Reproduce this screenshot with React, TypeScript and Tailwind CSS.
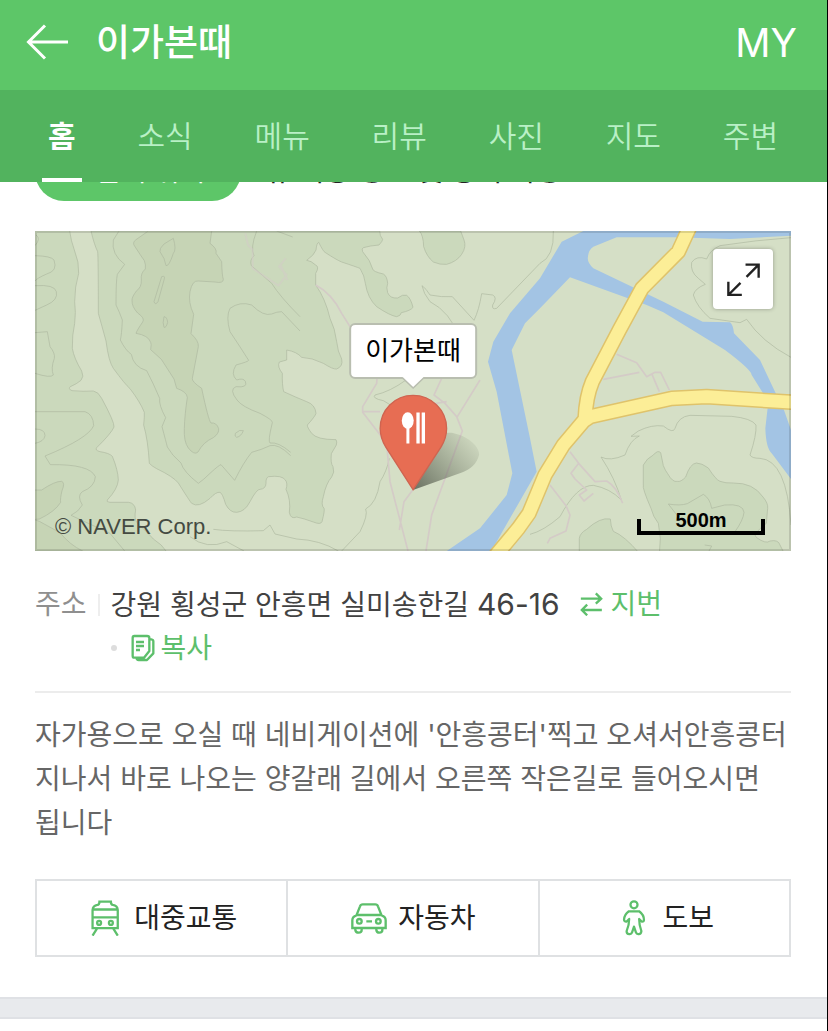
import type { ReactNode } from 'react';

const tabs = ['홈', '소식', '메뉴', '리뷰', '사진', '지도', '주변'];

function BackIcon() {
  return (
    <svg viewBox="0 0 42 36" className="h-9 w-[42px]" fill="none" stroke="currentColor" strokeWidth="3" aria-hidden="true">
      <path d="M19 1.5 2.5 18 19 34.5M2.5 18H42" />
    </svg>
  );
}

function TrainIcon() {
  return (
    <svg viewBox="211 121 84 110" className="h-9 w-7" fill="none" stroke="currentColor" strokeWidth="7" aria-hidden="true">
      <path d="M215 207V152Q216 138 230 136Q236 135 236 126H271Q271 135 277 136Q291 138 292 152V207ZM215 150H292M215 174H292M229 208 215 230M278 208 292 230" />
      <circle cx="235" cy="191" r="6" />
      <circle cx="271" cy="191" r="6" />
    </svg>
  );
}

function CarIcon() {
  return (
    <svg viewBox="993 130 108 93" className="h-[31px] w-9" fill="none" stroke="currentColor" strokeWidth="7" aria-hidden="true">
      <path d="M1009 168 1020 140Q1022 134 1028 134H1066Q1072 134 1074 140L1085 168M1009 166H1085M1009 168Q997 171 997 182V205H1097V182Q1097 171 1085 168M1039 185H1056" />
      <circle cx="1018" cy="185" r="7" />
      <circle cx="1075" cy="185" r="7" />
      <path d="M1006 206V211Q1007 219 1016 219Q1025 219 1025 211V206M1069 206V211Q1070 219 1078 219Q1087 219 1087 211V206" />
    </svg>
  );
}

function WalkIcon() {
  return (
    <svg viewBox="663 121 74 112" className="h-9 w-6" fill="none" stroke="currentColor" strokeWidth="7" strokeLinejoin="round" aria-hidden="true">
      <circle cx="700" cy="136" r="11" />
      <path d="M684 156H716Q731 167 731 183Q731 189 724 188L716 180Q716 199 723 218Q722 227 715 227Q708 228 706 222L700 204 694 222Q692 228 685 227Q677 227 677 218Q685 199 685 180L677 188Q669 189 669 182Q670 166 684 156Z" />
    </svg>
  );
}

function SwapIcon() {
  return (
    <svg viewBox="538 72 68 72" className="h-6 w-[23px]" fill="none" stroke="currentColor" strokeWidth="7" aria-hidden="true">
      <path d="M540 92H600M585 76 601 92 585 107M603 126H543M559 110 543 126 559 142" />
    </svg>
  );
}

function CopyIcon() {
  return (
    <svg viewBox="330 198 72 84" className="h-7 w-6" fill="none" stroke="currentColor" strokeWidth="7" strokeLinejoin="round" aria-hidden="true">
      <path d="M340 204H378Q385 204 385 210V249L369 269H340Q335 269 335 263V210Q335 204 340 204ZM345 222H369M345 234H369M345 246H357M387 214H391Q397 215 397 220V256L378 276H353Q347 276 347 270" />
    </svg>
  );
}

const contour = { stroke: '#adb8a0', strokeWidth: 2 };

function MapCanvas() {
  return (
    <svg viewBox="15 18 2268 960" className="block h-auto w-full bg-[#d5dfc6]" fill="none" strokeLinejoin="round" aria-hidden="true">
      <g fill="#cbd9bc" {...contour}>
        <path d="M0 0H115L119 18Q123 48 133 75Q148 112 146 145Q134 185 134 230Q138 262 134 295Q126 330 127 370Q132 400 155 438Q163 455 153 466Q140 477 121 485Q113 492 126 497Q160 500 190 498Q205 500 215 520Q254 592 252 606Q244 625 200 668Q194 676 210 680Q238 684 247 694Q264 735 265 765Q263 792 232 825Q228 831 240 832H296Q314 834 317 855Q312 880 320 892Q360 930 370 942Q398 960 408 978V990H0Z" />
        <path d="M183 18Q193 60 203 80Q205 95 205 265Q215 300 228 348Q236 410 250 430Q285 478 300 491Q330 530 343 562Q344 572 341 600Q354 645 358 715Q365 723 380 731Q430 755 445 774Q480 830 485 835Q505 850 540 820Q558 800 570 802Q577 804 587 838Q600 863 620 862Q645 860 660 830Q680 792 690 793Q707 792 708 775Q707 758 716 755Q756 750 766 765Q774 775 768 793Q783 825 778 862Q782 884 800 876Q820 880 850 891Q872 900 876 890Q885 855 882 850Q872 840 880 815Q888 775 905 756Q915 742 909 725Q901 715 904 686L919 660Q922 650 918 644Q860 644 845 625Q831 606 832 600Q855 575 858 565Q856 539 830 530Q800 518 761 500Q756 480 757 445Q741 425 748 411L770 405V375Q800 380 815 397Q846 398 880 415Q910 434 920 432Q940 424 935 402Q923 380 920 350Q915 310 900 280Q886 220 857 180V145Q869 125 857 120Q843 107 830 106Q853 90 858 75Q860 54 866 52Q880 80 885 82Q920 105 935 111Q980 126 990 130Q1004 153 1006 175Q1013 220 1040 245Q1080 272 1100 275Q1113 272 1114 263Q1142 257 1149 247Q1142 219 1130 211Q1118 207 1103 219Q1080 221 1073 203Q1068 188 1073 175Q1071 153 1060 147Q1029 140 1028 132Q1022 107 998 80Q994 70 1000 68Q1020 62 1047 60Q1058 48 1058 43Q1049 33 1049 18Z" />
        <path d="M1168 18Q1180 30 1181 65Q1190 95 1210 111Q1230 120 1250 118Q1280 110 1295 88Q1310 65 1302 45L1292 18Z" />
        <path d="M1840 720Q1850 700 1870 690Q1883 674 1892 683L1900 722Q1906 737 1913 746Q1928 773 1942 769Q1952 772 1967 756Q1980 716 1999 714Q2015 714 2035 729Q2058 765 2070 769Q2086 775 2110 774Q2170 773 2199 816Q2215 835 2213 850L2209 895Q2164 930 2180 938Q2208 958 2220 948Q2245 943 2250 960L2265 990H1888L1891 940 1885 895Q1869 875 1863 850Q1836 788 1840 780Z" />
        <path d="M1648 990V940Q1650 924 1670 913Q1710 876 1741 882Q1742 905 1750 919Q1784 933 1828 985Z" />
      </g>
      <g fill="#c6d4b5" {...contour}>
        <path d="M355 18 318 44Q305 53 315 65Q331 90 343 107Q348 120 346 132Q331 145 334 165Q335 187 320 197Q306 215 306 225Q305 245 323 264Q346 280 338 291Q320 317 318 325Q355 331 362 352Q365 355 362 374L394 403 432 462 440 490Q470 500 472 517Q464 570 463 610Q461 650 475 669Q493 692 504 681Q520 651 550 638Q568 625 566 611Q560 592 543 594Q535 585 515 490Q485 470 487 460L505 365Q507 348 483 326L491 268Q474 232 480 200Q487 165 505 168L555 171Q580 176 580 163Q576 152 575 110L558 85Q562 71 540 55L545 18Z" />
        <path d="M0 795H35Q75 768 95 769Q106 773 96 797Q90 822 92 832Q75 860 28 882L0 885ZM0 880 28 889 90 923Q120 960 158 978H0Z" />
      </g>
      <g {...contour}>
        <path d="M430 40Q440 75 430 85Q417 125 408 122Q405 100 390 80Q387 71 402 57ZM395 155Q407 150 402 165L384 230Q376 242 372 230ZM402 275Q411 275 413 292Q408 310 402 307Q397 294 402 275ZM616 625Q630 612 640 617Q634 634 620 637Q613 635 616 625Z" />
        <path d="M267 18 250 45Q243 88 284 118L262 148Q258 165 258 240Q268 260 277 285Q275 330 271 345Q287 377 304 388Q310 425 350 437Q370 475 389 520Q386 540 407 578L396 605Q408 650 412 666 425 690 453 714Q460 740 505 775Q520 765 540 745Q567 720 573 719L614 766Q640 713 665 682Q695 674 720 662Q745 655 782 692M782 682Q745 650 720 654Q713 650 727 593Q730 586 690 565 635 545 621 525 596 493 618 485 655 489 646 469 640 458 620 465 601 448 618 420 655 410 656 406 630 365 600 320 587 275 600 250 630 228 665 240 700 275 725 267 740 260 755 260L810 318" />
        <path d="M15 92Q63 93 72 105 84 138 50 147 20 160 15 168M15 182Q74 178 79 200 85 225 50 240L15 256M15 323 52 320 60 365Q76 385 73 400 62 430 70 450 62 460 15 445M15 560H165Q190 568 191 602 175 640 45 693L61 719Q180 717 196 755 195 785 157 800 140 812 157 840 146 860 123 871L240 925 284 978M15 612Q45 612 45 632 42 650 15 655M480 935Q530 975 590 950L642 978M550 913Q600 920 700 917L720 900 735 927 800 942Q870 945 925 978M18 30Q34 40 15 62" />
        <path d="M680 18Q660 70 672 92 658 105 664 122L725 175Q750 215 810 275M740 18 788 36" />
        <path d="M1290 340Q1260 260 1200 230 1180 205 1176 182 1188 190 1200 210 1235 217 1267 215L1332 286Q1347 255 1355 206L1388 210Q1403 217 1388 240 1385 255 1400 250L1530 115Q1573 95 1570 18" />
        <path d="M1128 465Q1080 500 1035 510 1025 520 1060 527L1090 545M1078 700Q1070 740 1050 770 1040 835 1007 852 1015 870 990 920L935 978" />
        <path d="M2283 38Q2180 45 2070 62 2040 75 2030 102 2000 90 1985 112 1980 140 2005 160L2026 178Q1995 190 1990 210 2000 245 2040 280L2130 293 2150 283Q2195 350 2283 397" />
        <path d="M1500 928Q1540 918 1590 875 1640 780 1690 781 1740 790 1774 825 1755 760 1713 696 1740 710 1785 690 1800 645 1828 633L1803 634 1825 618Q1865 598 1900 603 1930 627 1935 610 1945 575 1980 571L2105 574Q2165 580 2178 600 2180 630 2160 690 2165 700 2190 700 2270 705 2283 900M1915 837Q1950 843 1972 836L2020 808Q2040 820 2045 850L2084 840Q2140 835 2142 862 2140 885 2115 920M1915 837 1948 880M2024 960 2045 963 2037 978" />
      </g>
      <path stroke="#d4cbc7" strokeOpacity=".5" strokeWidth="6" d="M646 25 654 60 668 75 668 130 745 182 770 150 747 125 767 100M752 120 772 165" />
      <g stroke="#d4cbc7" strokeWidth="5">
        <path d="M857 180Q905 205 935 265L960 305M1042 440 1040 475 998 545V562L1070 655 1080 770 1134 978M998 560H1050M1235 460 1212 510 1245 535 1280 575 1297 618Q1230 800 1205 870L1188 978M1350 465 1282 575M1148 795 1122 830 1108 915M1190 540 1250 530" />
        <path d="M1760 388 1820 413 1850 455 1875 442H1892L1918 495M1720 463 1828 442M1866 448 1888 500M1620 680 1646 715 1623 745 1635 762 1670 795 1648 810 1662 828 1690 805M1646 715 1695 770 1730 768Q1760 785 1778 835M1560 780 1608 842 1620 870 1608 918 1560 940 1552 955" />
      </g>
      <path
        fill="#a3c4e4"
        d="M1660 0V18L1595 50 1530 160 1440 265 1390 350 1374 410 1400 500 1447 745 1430 810 1350 910 1240 985H1380L1520 740 1500 640 1445 375 1485 295 1530 250 1620 157 1850 240 1900 262 2085 375Q2165 435 2165 450L2215 530 2206 610Q2208 670 2225 685L2283 762V615L2260 550 2235 500 2190 405 2112 325Q2110 300 2100 292L2018 290 1900 230 1690 130Q1670 110 1674 95 1675 75 1690 65L1760 37 1940 37 2100 42 2283 32V0Z"
      />
      <g stroke="#dfc36b" strokeWidth="47">
        <path d="M1982 0 1945 80 1836 190 1768 315 1687 470Q1668 515 1665 583L1600 660 1545 750 1497 865 1465 910 1390 1000M1662 587 1680 575 1925 520 2030 515 2290 532" />
      </g>
      <g stroke="#fcee97" strokeWidth="38">
        <path d="M1982 0 1945 80 1836 190 1768 315 1687 470Q1668 515 1665 583L1600 660 1545 750 1497 865 1465 910 1390 1000M1662 587 1680 575 1925 520 2030 515 2290 532" />
      </g>
    </svg>
  );
}

function PinIcon() {
  return (
    <svg viewBox="296 508 306 292" className="block h-[97px] w-[102px]" aria-hidden="true">
      <defs>
        <linearGradient id="pin-shadow" gradientUnits="userSpaceOnUse" x1="400" y1="790" x2="570" y2="640">
          <stop offset="0" stopColor="#3f4539" stopOpacity=".7" />
          <stop offset="1" stopColor="#5b6351" stopOpacity=".08" />
        </linearGradient>
      </defs>
      <path fill="url(#pin-shadow)" d="M398 797 470 625H515C560 634 596 662 597 690C590 720 570 735 545 744Z" />
      <path fill="#e76d53" stroke="#cf6450" strokeWidth="4" d="M398 796 316 668C305 650 299 632 299 612C299 556 343 512 398 512S499 556 499 612C499 632 493 650 482 668Z" />
      <g fill="#fff">
        <ellipse cx="382" cy="588" rx="18" ry="25" />
        <path d="M378 605H387V657H378ZM408 564H418V657H408ZM424 564H434V657H424Z" />
      </g>
    </svg>
  );
}

function RouteButton({ icon, label }: { icon: ReactNode; label: string }) {
  return (
    <button type="button" className="flex flex-1 items-center justify-center gap-2.5 text-[28px] leading-10 text-[#222]">
      <span className="flex w-[38px] justify-center text-[#5dbf6b]">{icon}</span>
      {label}
    </button>
  );
}

export default function App() {
  return (
    <div className="min-h-screen border-r border-black bg-white font-['Inter','Noto_Sans_CJK_KR',sans-serif]">
      <header className="text-white">
        <div className="flex h-[90px] items-center bg-[#5dc668] pr-[30px] pb-1.5 pl-[26px]">
          <button type="button" aria-label="뒤로">
            <BackIcon />
          </button>
          <h1 className="ml-7 flex-1 text-[37px] leading-none font-medium">이가본때</h1>
          <a href="#my" className="text-[39px] leading-none">MY</a>
        </div>
        <nav className="flex h-[92px] justify-between bg-[#52b35e] pr-[43px] pl-[42px] text-[30px] leading-[92px]">
          {tabs.map((tab, i) =>
            i === 0 ? (
              <a key={tab} href="#home" aria-current="page" className="flex border-b-4 border-white px-1.5 font-bold">
                {tab}
              </a>
            ) : (
              <a key={tab} href={`#tab-${i}`} className="px-1.5 font-[350] text-[#b9f0c6]">
                {tab}
              </a>
            ),
          )}
        </nav>
      </header>

      <main>
        <div className="pr-9 pl-[35px]">
          <div className="flex h-[19px] items-end gap-6 overflow-hidden text-[28px] leading-none">
            <button type="button" className="h-[58px] w-[206px] shrink-0 rounded-full bg-[#5dc668] pb-0.5 pl-6 text-white">
              현재 위치
            </button>
            <button type="button" className="h-[58px] shrink-0 pb-0.5 whitespace-nowrap text-[#222]">
              뷰 이동 정보 및 공지 사항
            </button>
          </div>

          <section aria-label="지도" className="relative mt-[30px] overflow-hidden">
            <MapCanvas />
            <div className="pointer-events-none absolute inset-0 border-2 border-black/12" />
            <div className="absolute top-[92px] left-1/2 -translate-x-1/2 rounded-md border-2 border-[#b9beb0] bg-white px-3.5 text-[26px] leading-[52px] whitespace-nowrap text-black">
              이가본때
              <svg viewBox="0 0 22 12" className="absolute top-full left-1/2 h-3 w-[22px] -translate-x-1/2" aria-hidden="true">
                <path fill="#fff" d="M0 0H22L11 11Z" />
                <path fill="none" stroke="#b9beb0" strokeWidth="1.5" d="M0 .5 11 11 22 .5" />
              </svg>
            </div>
            <div className="absolute top-[163px] left-1/2 -ml-[34px]">
              <PinIcon />
            </div>
            <button
              type="button"
              aria-label="지도 확대"
              className="absolute top-[18px] right-[18px] flex size-[60px] items-center justify-center rounded bg-white shadow-[0_0_4px_rgba(0,0,0,0.3)]"
            >
              <svg viewBox="590 112 98 98" className="size-[33px]" fill="none" stroke="#222" strokeWidth="7" aria-hidden="true">
                <path d="M645 117H684V156M684 117 648 153M594 168V207H634M594 207 630 171" />
              </svg>
            </button>
            <p className="absolute bottom-2.5 left-5 font-['Liberation_Sans',sans-serif] text-[22px] leading-7 text-[#444a42]">© NAVER Corp.</p>
            <p className="absolute right-[26px] bottom-4 h-4 w-32 border-4 border-t-0 border-black text-center font-['Liberation_Sans',sans-serif] text-xl leading-[2px] font-bold text-black">
              500m
            </p>
          </section>

          <address className="mt-[31px] flex text-[28px] leading-[44px] text-[#424242] not-italic">
            <span className="text-[#8f8f8f]">주소</span>
            <span className="mx-[11px] mt-3 h-[22px] w-0.5 bg-[#eee]" />
            <div>
              <div className="flex h-11 items-center">
                <span>
                  강원 횡성군 안흥면 실미송한길 <span className="text-[30px]">46-16</span>
                </span>
                <button type="button" className="ml-5 flex items-center gap-2 text-[#5dbf6b]">
                  <SwapIcon />
                  지번
                </button>
              </div>
              <div className="flex h-11 items-center">
                <span className="size-1.5 rounded-full bg-[#ddd]" />
                <button type="button" className="ml-3.5 flex items-center gap-1.5 text-[#5dbf6b]">
                  <CopyIcon />
                  복사
                </button>
              </div>
            </div>
          </address>

          <p className="mt-[21px] border-t-2 border-[#ececec] pt-5 text-[28px] leading-[44px] break-keep text-[#666]">
            자가용으로 오실 때 네비게이션에 '안흥콩터'찍고 오셔서안흥콩터 지나서 바로 나오는 양갈래 길에서 오른쪽 작은길로 들어오시면 됩니다
          </p>

          <div className="mt-[34px] flex h-[78px] divide-x-2 divide-[#dfe1e3] border-2 border-[#dfe1e3]">
            <RouteButton icon={<TrainIcon />} label="대중교통" />
            <RouteButton icon={<CarIcon />} label="자동차" />
            <RouteButton icon={<WalkIcon />} label="도보" />
          </div>
        </div>
        <div className="mt-10 h-[22px] border-y-2 border-[#dfe1e5] bg-[#e8eaed]" />
      </main>
    </div>
  );
}
